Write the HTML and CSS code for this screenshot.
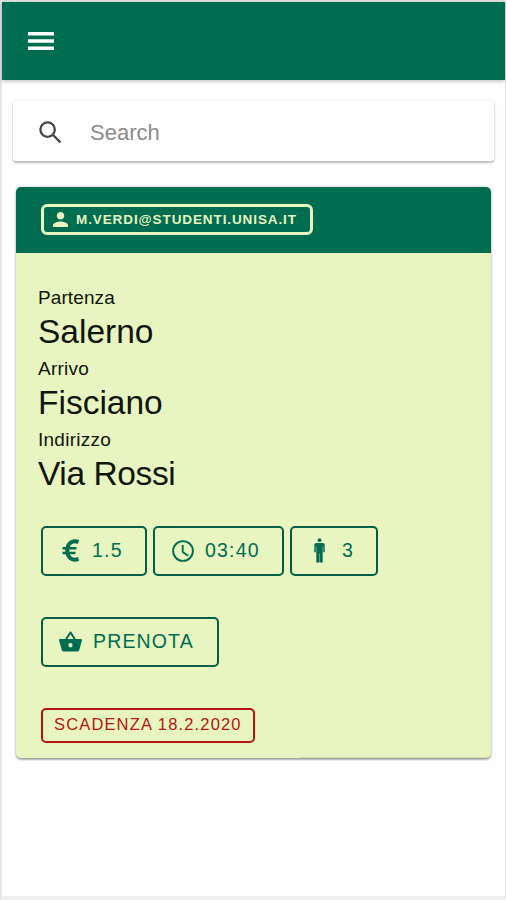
FILE: index.html
```html
<!DOCTYPE html>
<html lang="it">
<head>
<meta charset="utf-8">
<meta name="viewport" content="width=device-width, initial-scale=1">
<title>Passaggi</title>
<link rel="stylesheet" href="styles.css">
</head>
<body>
<div class="screen">
  <header class="toolbar">
    <svg class="menu-icon" viewBox="0 0 26 18"><path d="M0 0h26v3.600H0zM0 7.200h26v3.600H0zM0 14.400h26v3.600H0z"/></svg>
  </header>
  <main>
    <div class="search">
      <svg class="search-icon" viewBox="0 0 23 23"><circle cx="8.6" cy="8.6" r="7.2"/><path d="M14 14l7.4 7.4"/></svg>
      <span>Search</span>
    </div>
    <article class="card">
      <div class="card-header">
        <div class="chip user">
          <svg class="user-icon" viewBox="4 4 16 16"><path d="M12 12c2.21 0 4-1.79 4-4s-1.79-4-4-4-4 1.79-4 4 1.79 4 4 4zm0 2c-2.67 0-8 1.34-8 4v2h16v-2c0-2.66-5.33-4-8-4z"/></svg>
          <span>M.VERDI@STUDENTI.UNISA.IT</span>
        </div>
      </div>
      <div class="card-body">
        <dl class="trip">
          <dt>Partenza</dt><dd>Salerno</dd>
          <dt class="spaced">Arrivo</dt><dd>Fisciano</dd>
          <dt class="spaced">Indirizzo</dt><dd class="tight">Via Rossi</dd>
        </dl>
        <div class="facts">
          <div class="chip fact price">
            <svg class="euro-icon" viewBox="0 0 18 23"><path d="M16.500 3C10.500 1 5.300 4 5.300 11.500s5.200 10.500 11.200 8.500"/><path class="bars" d="M.5 9.300h14M.5 14h13"/></svg>
            <span>1.5</span>
          </div>
          <div class="chip fact time">
            <svg class="clock-icon" viewBox="0 0 22 22"><circle cx="11" cy="11" r="9.900"/><path d="M10.700 5v7l5.300 3.800"/></svg>
            <span>03:40</span>
          </div>
          <div class="chip fact seats">
            <svg class="man-icon" viewBox="0 0 11 25"><circle cx="5.500" cy="2.200" r="1.900"/><path d="M2.400 4.900h6.200Q10.700 4.900 10.700 7V14.300H9.200V8.500H8.700V24.500H5.700V15.500H5.300V24.500H2.300V8.500H1.800V14.300H.3V7Q.3 4.900 2.400 4.900z"/></svg>
            <span>3</span>
          </div>
        </div>
        <button class="chip book">
          <svg class="basket-icon" viewBox="1 2 22 19"><path d="M17.210 9l-4.380-6.560c-.19-.28-.51-.42-.83-.42-.32 0-.64.14-.83.430L6.790 9H2c-.55 0-1 .45-1 1 0 .09.010.18.040.270l2.540 9.270c.23.840 1 1.460 1.920 1.460h13c.92 0 1.690-.62 1.930-1.460l2.540-9.270L23 10c0-.55-.45-1-1-1h-4.790zM9 9l3-4.400L15 9H9zm3 8c-1.100 0-2-.9-2-2s.9-2 2-2 2 .9 2 2-.9 2-2 2z"/></svg>
          <span>PRENOTA</span>
        </button>
        <div class="chip expiry"><span>SCADENZA 18.2.2020</span></div>
      </div>
    </article>
  </main>
</div>
</body>
</html>
```
FILE: styles.css
```css
* { box-sizing: border-box; }

body {
  margin: 0;
  background: #f1f1f1;
  font-family: "Liberation Sans", Arial, sans-serif;
}

.screen {
  height: 900px;
  border: solid #e4e4e4;
  border-width: 2px 1px 4px 2px;
  border-bottom-color: #f0f0f0;
  background: #fefefe;
}

svg { display: block; flex: none; fill: currentColor; }
span { white-space: nowrap; }

.toolbar {
  display: flex;
  align-items: center;
  height: 78px;
  padding-left: 26px;
  background: #006c50;
  color: #fff;
  box-shadow: 0 1px 4px rgba(0, 0, 0, .28);
}

.menu-icon { width: 26px; height: 18px; }

main { padding: 21px 11px 0; }

.search {
  display: flex;
  align-items: center;
  height: 60px;
  padding: 3px 0 0 26px;
  border-radius: 3px;
  background: #fff;
  color: #8b8b8b;
  font-size: 22px;
  box-shadow: 0 2px 2px rgba(0, 0, 0, .24), 0 0 3px rgba(0, 0, 0, .12);
}

.search span { margin-left: 28px; }

.search-icon {
  width: 23px;
  height: 23px;
  fill: none;
  stroke: #454545;
  stroke-width: 2.3;
}

.card {
  height: 571px;
  margin: 26px 3px 0;
  border-radius: 5px;
  background:
    linear-gradient(#d0dba4, #d0dba4) right bottom / 191px 1px no-repeat,
    #e8f5c0;
  overflow: hidden;
  box-shadow: 0 2px 2px rgba(0, 0, 0, .3), 0 0 3px rgba(0, 0, 0, .2);
}

.card-header {
  height: 66px;
  padding: 17px 25px 0;
  background: #006c50;
}

.chip {
  display: flex;
  align-items: center;
  border: 2px solid #006045;
  border-radius: 5px;
  background: transparent;
  color: #006c50;
  font-family: inherit;
}

.user {
  width: 272px;
  height: 31px;
  padding: 0 0 0 9px;
  border: 3px solid #e8f5c0;
  border-radius: 6px;
  color: #e8f5c0;
  font-size: 13.5px;
  font-weight: bold;
  letter-spacing: .9px;
}

.user-icon { width: 15px; height: 15px; margin-right: 8px; }

.card-body { padding: 32px 24px 0 22px; }

.trip { margin: 0; color: #10150e; padding-top: 1px; }
.trip dt { font-size: 19px; line-height: 24px; letter-spacing: .1px; }
.trip dt.spaced { letter-spacing: .25px; }
.trip dd { margin: 0 0 4px; font-size: 33.5px; line-height: 43.2px; }
.trip dd.tight { letter-spacing: -.4px; }

.facts {
  display: flex;
  gap: 6px;
  margin: 30px 0 0 3px;
}

.fact {
  height: 50px;
  font-size: 19.5px;
  letter-spacing: 1.2px;
}

.price { width: 106px; padding-left: 19px; }
.time { width: 131px; padding-left: 17px; }
.seats { width: 88px; padding-left: 22px; }

.euro-icon {
  width: 18px;
  height: 23px;
  margin-right: 12px;
  fill: none;
  stroke: currentColor;
  stroke-width: 4;
}
.euro-icon .bars { stroke-width: 2.5; }

.clock-icon {
  width: 22px;
  height: 22px;
  margin-right: 11px;
  fill: none;
  stroke: currentColor;
  stroke-width: 1.9;
}

.man-icon { width: 11px; height: 25px; margin-right: 17px; }

.book {
  width: 178px;
  height: 50px;
  margin: 41px 0 0 3px;
  padding: 0 0 0 16px;
  font-size: 19.5px;
  letter-spacing: 1.15px;
}

.basket-icon { width: 23px; height: 21px; margin-right: 11px; }

.expiry {
  width: 214px;
  height: 35px;
  margin: 41px 0 0 3px;
  padding: 0 0 1px 11px;
  border-color: #b41612;
  color: #b41612;
  font-size: 16.5px;
  letter-spacing: 1.15px;
}
```
